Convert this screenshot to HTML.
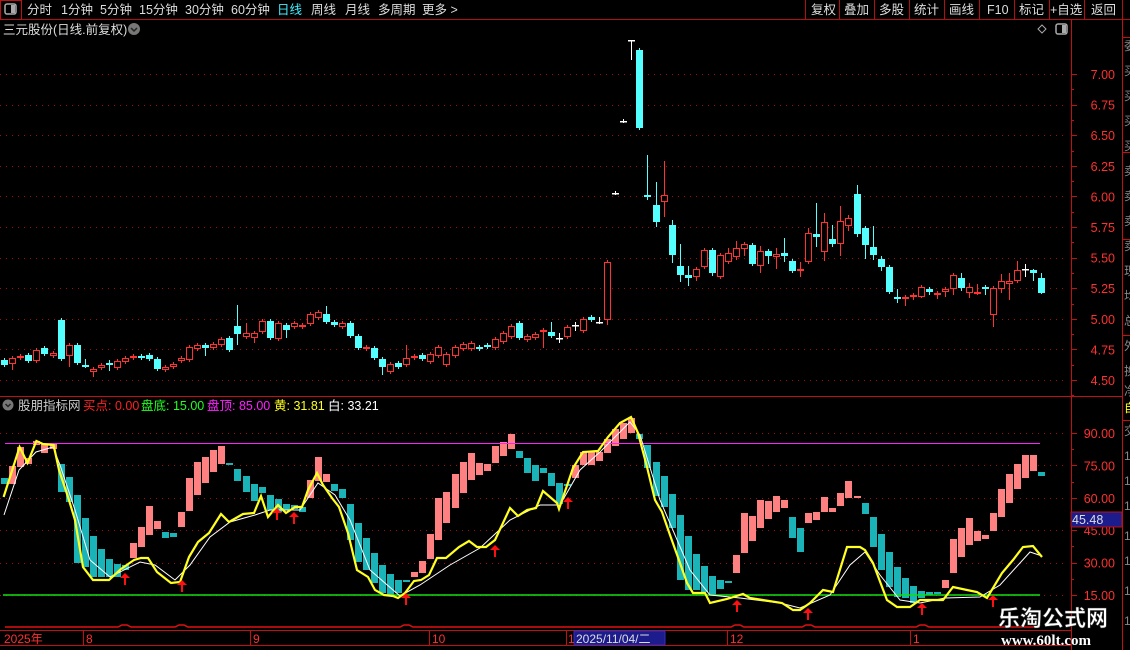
<!DOCTYPE html>
<html><head><meta charset="utf-8"><style>
body{margin:0;background:#000;width:1130px;height:650px;overflow:hidden;font-family:"Liberation Sans","Noto Sans CJK SC",sans-serif;}
svg{position:absolute;left:0;top:0}
</style></head><body>
<svg id="s" width="1130" height="650" xmlns="http://www.w3.org/2000/svg" font-family="Liberation Sans, Noto Sans CJK SC, sans-serif">
<rect width="1130" height="650" fill="#000"/>
<line x1="0" y1="19.5" x2="1130" y2="19.5" stroke="#b01010"/>
<rect x="0.5" y="0.5" width="21" height="19" fill="none" stroke="#c01010"/>
<rect x="5" y="4" width="11" height="10" rx="2" fill="none" stroke="#aaa" stroke-width="1.5"/>
<rect x="11" y="5" width="4" height="8" fill="#aaa"/>
<g font-size="12.5" fill="#ddd">
<text x="27" y="14">分时</text><text x="61" y="14">1分钟</text><text x="100" y="14">5分钟</text><text x="139" y="14">15分钟</text><text x="185" y="14">30分钟</text><text x="231" y="14">60分钟</text>
<text x="277" y="14" fill="#4ef">日线</text><text x="311" y="14">周线</text><text x="345" y="14">月线</text><text x="378" y="14">多周期</text><text x="422" y="14">更多 &gt;</text>
<text x="811" y="14">复权</text><text x="844" y="14">叠加</text><text x="879" y="14">多股</text><text x="914" y="14">统计</text><text x="949" y="14">画线</text><text x="987" y="14">F10</text><text x="1019" y="14">标记</text><text x="1050" y="14">+自选</text><text x="1091" y="14">返回</text>
</g>
<g stroke="#b01010"><line x1="805.5" y1="0" x2="805.5" y2="19"/><line x1="839.5" y1="0" x2="839.5" y2="19"/><line x1="874.5" y1="0" x2="874.5" y2="19"/><line x1="909.5" y1="0" x2="909.5" y2="19"/><line x1="944.5" y1="0" x2="944.5" y2="19"/><line x1="979.5" y1="0" x2="979.5" y2="19"/><line x1="1014.5" y1="0" x2="1014.5" y2="19"/><line x1="1049.5" y1="0" x2="1049.5" y2="19"/><line x1="1084.5" y1="0" x2="1084.5" y2="19"/><line x1="1122.5" y1="0" x2="1122.5" y2="19"/></g>
<text x="3" y="34" font-size="12.5" fill="#ddd">三元股份(日线.前复权)</text>
<circle cx="134" cy="29" r="6" fill="#777"/><path d="M131 28l3 3 3-3" stroke="#222" stroke-width="1.5" fill="none"/>
<path d="M1042 25l4 4-4 4-4-4z" fill="none" stroke="#aaa"/>
<rect x="1056" y="24" width="11" height="10" rx="2" fill="none" stroke="#aaa" stroke-width="1.5"/><rect x="1062" y="25" width="4" height="8" fill="#aaa"/>
<line x1="1071.5" y1="19" x2="1071.5" y2="650" stroke="#c01010"/>
<line x1="1122.5" y1="19" x2="1122.5" y2="650" stroke="#c01010"/>
<line x1="0" y1="396.5" x2="1122" y2="396.5" stroke="#c01010"/>
<g id="grid"></g>
<g id="cand"></g>
<g id="ind"></g>
<line x1="5" y1="443.5" x2="1040" y2="443.5" stroke="#ff20ff"/>
<line x1="3" y1="595" x2="1040" y2="595" stroke="#10e010" stroke-width="1.5"/>
<polyline id="wl" fill="none" stroke="#fff" stroke-width="1" points="4,515 19,470 36,452 53,447 60,465 75,510 90,560 110,577 140,562 155,565 175,580 190,565 210,537 230,522 255,515 270,510 300,510 318,483 335,495 350,520 370,570 400,596 420,585 450,565 480,548 510,520 540,505 560,505 580,470 600,452 620,432 630,422 640,435 660,500 690,570 710,595 740,598 780,603 800,608 830,595 850,565 865,552 880,575 900,600 920,603 945,598 980,597 1000,585 1030,552 1042,556"/>
<polyline fill="none" stroke="#ffff20" stroke-width="2.2" points="3.6,497 19.6,447 27.5,463 36.4,441 43,444 53.6,445 59,470 68,497 75,520 83,567 93,580 109,580 121,569 134,560 141,558 148,558 157,572 171,583 180,582 189,557 198,542 209,533 221,514 229,522 243,514 254,513 261,496 268,517 278,505 286,513 295,507 302,507 308,490 317,473 323,485 332,498 339,507 348,533 357,570 368,577 375,590 384,595 393,596 398,598 405,593 414,581 421,580 429,575 437,558 446,558 459,547 469,541 477,547 486,547 495,540 510,508 518,516 527,510 536,508 543,491 557,503 559,509 573,468 583,452 598,451 608,437 620,423 631,417 638,433 647,467 655,500 662,512 670,535 680,563 687,583 693,593 705,593 710,603 727,599 743,594 750,598 782,603 793,610 800,610 810,603 823,590 833,592 847,547 860,547 865,550 873,563 887,600 897,607 910,607 920,600 943,600 953,587 967,590 977,592 987,598 1002,573 1013,560 1023,547 1033,546 1042,557"/>
<g id="arr" fill="#ff1010"></g>
<path d="M5 627H118l4-2h5l4 2H175l4-2h5l4 2H400l4-2h5l4 2H731l4-2h5l4 2H802l4-2h5l4 2H916l4-2h5l4 2H1040" stroke="#e01010" fill="none" stroke-width="1.5"/>
<line x1="0" y1="630.5" x2="1071" y2="630.5" stroke="#c01010"/>
<line x1="0" y1="645.5" x2="1071" y2="645.5" stroke="#c01010"/>
<g stroke="#c01010"><line x1="83.5" y1="631" x2="83.5" y2="645"/><line x1="250.5" y1="631" x2="250.5" y2="645"/><line x1="429.5" y1="631" x2="429.5" y2="645"/><line x1="566.5" y1="631" x2="566.5" y2="645"/><line x1="727.5" y1="631" x2="727.5" y2="645"/><line x1="910.5" y1="631" x2="910.5" y2="645"/></g>
<rect x="574" y="631" width="91" height="14" fill="#1c1c8c" stroke="#3030c0"/>
<g font-size="12" fill="#ff3030"><text x="4" y="643">2025年</text><text x="86" y="643">8</text><text x="253" y="643">9</text><text x="432" y="643">10</text><text x="568" y="643">1</text><text x="730" y="643">12</text><text x="913" y="643">1</text></g>
<text x="576" y="643" font-size="12" fill="#ddd">2025/11/04/二</text>
<circle cx="8" cy="405" r="5.5" fill="#777"/><path d="M5.5 404l2.5 2.5 2.5-2.5" stroke="#222" stroke-width="1.5" fill="none"/>
<g font-size="12.5"><text x="18" y="410" fill="#ccc">股朋指标网</text><text x="83" y="410" fill="#ff2020">买点: 0.00</text><text x="141" y="410" fill="#20ff20">盘底: 15.00</text><text x="207" y="410" fill="#ff20ff">盘顶: 85.00</text><text x="274" y="410" fill="#ffff20">黄: 31.81</text><text x="328" y="410" fill="#fff">白: 33.21</text></g>
<g id="lab" font-size="12.5" fill="#ff3030" text-anchor="end"></g>
<rect x="1071" y="512" width="51" height="15" fill="#1c1c8c" stroke="#c01010"/>
<text x="1072" y="524" font-size="12.5" fill="#ddd">45.48</text>
<text x="1124" y="412" font-size="12" fill="#ffff20">自</text>
<g font-size="12" fill="#888"><text x="1124" y="50">委</text><text x="1124" y="75">买</text><text x="1124" y="100">买</text><text x="1124" y="125">买</text><text x="1124" y="150">买</text><text x="1124" y="175">卖</text><text x="1124" y="200">卖</text><text x="1124" y="225">卖</text><text x="1124" y="250">卖</text><text x="1124" y="275">现</text><text x="1124" y="300">均</text><text x="1124" y="325">总</text><text x="1124" y="350">外</text><text x="1124" y="375">换</text><text x="1124" y="395">净</text><text x="1124" y="435">交</text><text x="1124" y="460">1</text><text x="1124" y="485">1</text><text x="1124" y="510">1</text><text x="1124" y="540">1</text><text x="1124" y="565">1</text><text x="1124" y="595">1</text><text x="1124" y="625">1</text></g>
<g stroke="#c01010"><line x1="1122" y1="37.5" x2="1130" y2="37.5"/><line x1="1122" y1="152.5" x2="1130" y2="152.5"/><line x1="1122" y1="239.5" x2="1130" y2="239.5"/><line x1="1122" y1="335.5" x2="1130" y2="335.5"/><line x1="1122" y1="420.5" x2="1130" y2="420.5"/></g>
<text x="998" y="626" font-size="22" font-weight="bold" fill="#fff" stroke="#333" stroke-width="0.5">乐淘公式网</text>
<text x="1001" y="645" font-size="15" font-weight="bold" fill="#fff" font-family="Liberation Serif, serif">www.60lt.com</text>
</svg>
<script>
var NS="http://www.w3.org/2000/svg";
function el(p,t,a){var e=document.createElementNS(NS,t);for(var k in a)e.setAttribute(k,a[k]);document.getElementById(p).appendChild(e);return e;}
var pl=["7.00","6.75","6.50","6.25","6.00","5.75","5.50","5.25","5.00","4.75","4.50"];
for(var i=0;i<11;i++){var y=74+i*30.6;var yy=Math.round(y)+0.5;
el("grid","line",{x1:0,y1:yy,x2:1068,y2:yy,stroke:"#a01010","stroke-dasharray":"1,5"});
el("grid","line",{x1:1071,y1:yy,x2:1077,y2:yy,stroke:"#c01010"});
el("grid","line",{x1:1071,y1:Math.round(y+15.3)+0.5,x2:1074,y2:Math.round(y+15.3)+0.5,stroke:"#c01010"});
var t=el("lab","text",{x:1115,y:y+5});t.textContent=pl[i];}
var il=["90.00","75.00","60.00","45.00","30.00","15.00"];
for(var i=0;i<6;i++){var y=433+i*32.4;var yy=Math.round(y)+0.5;
el("grid","line",{x1:0,y1:yy,x2:1068,y2:yy,stroke:"#a01010","stroke-dasharray":"1,5"});
el("grid","line",{x1:1071,y1:yy,x2:1077,y2:yy,stroke:"#c01010"});
el("grid","line",{x1:1071,y1:Math.round(y+16.2)+0.5,x2:1074,y2:Math.round(y+16.2)+0.5,stroke:"#c01010"});
var t=el("lab","text",{x:1115,y:y+5});t.textContent=il[i];}
var C=[["c",360,365],["r",358,364,0,370],["r",356,358],["c",355,361],["r",350,361],["c",348,354],["r",353,356],["c",320,359],["r",345,356,0,367],["c",345,363],
["c",365,366,359],["r",369,372,0,377],["r",365,368],["c",363,364,360,371],["r",361,368],["r",358,362],["r",356,358],["c",356,358],["c",355,359],["c",359,369],
["r",367,370],["r",364,367],["r",358,361],["r",347,360],["r",345,349],["c",345,348,0,356],["r",344,348],["r",339,345],["c",338,350],["c",326,334,305,345],
["r",333,337,323],["r",333,338,0,343],["r",321,332],["c",321,338],["r",323,339],["c",325,330,0,338],["r",323,327],["r",325,327],["r",314,324],["r",312,318],
["c",314,322,306],["c",322,325],["r",323,327],["c",323,336],["c",336,348],["r",347,349],["c",348,358],["c",359,367,0,375],["r",364,372],["c",363,367],
["r",358,365,345],["r",356,358],["c",355,359],["r",354,362],["r",347,356],["r",354,365],["r",347,356],["r",344,349],["r",343,349],["c",347,349],
["c",345,347],["r",339,348],["r",333,342],["r",326,337],["c",323,338],["r",336,340],["r",334,338],["f",330,332,0,348],["c",332,336,322],["w",338,338,333,343],
["r",327,337],["w",325,325,322,331],["r",319,331],["c",317,320],["w",322,322,317],["r",262,320,0,325],["w",193,193],["w",121,121],["w",40,40,40,60],["c",50,128],
["c",195,195,155,200],["c",205,222,182,227],["r",195,202,161,217],["c",225,255,220,263],["c",266,275,244,282],["c",275,278,266,286],["r",269,277,0,281],["r",250,267],["c",250,273,0,276],["r",255,277],
["r",253,262,248],["r",248,257,241,260],["r",244,249,0,256],["c",245,264,0,266],["r",251,266,246,273],["c",251,256,0,264],["r",254,257,248,269],["c",253,256,238,262],["c",261,271,0,273],["f",269,270,262,277],
["r",233,262,228],["c",234,237,203,247],["r",222,252,213,261],["c",239,244,225,247],["r",221,244,206,256],["r",218,226,215,231],["c",194,234,185,237],["c",228,245,0,259],["c",247,255,226,260],["c",259,267,256,271],
["c",267,292,0,294],["c",297,299,289,303],["f",297,298,295,306],["r",295,297,0,300],["r",287,297,0,298],["c",289,292,0,295],["r",293,295,0,299],["r",289,292,0,297],["r",275,289,0,295],["c",278,288,273,291],
["r",287,293,283,298],["f",292,293,284,295],["c",287,289,0,295],["r",288,315,0,327],["r",281,289,274,293],["r",281,284,273,300],["r",270,281,261,283],["w",269,269,264,277],["c",270,273,269,281],["c",278,293,273,294]];
for(var i=0;i<C.length;i++){var d=C[i],x=Math.round(4.3+8.04*i),t=d[1],b=d[2],h=d[3]||t-2,l=d[4]||b+2;
var col=d[0]=="c"?"#54ffff":d[0]=="w"?"#fff":"#ff3232";
el("cand","line",{x1:x+0.5,y1:h,x2:x+0.5,y2:l,stroke:col});
if(d[0]=="r"){el("cand","rect",{x:x-2.5,y:t+0.5,width:6,height:Math.max(b-t-1,1),fill:"#000",stroke:col});}
else if(d[0]=="w"){el("cand","rect",{x:x-3,y:t,width:7,height:1.5,fill:col});}
else{el("cand","rect",{x:x-3,y:t,width:7,height:Math.max(b-t,2),fill:col});}}
var B=[["c",478,484],["p",466,484],["p",447,467],["p",458,464],["p",441,445],["p",443,453],["p",444,449],["c",464,492],["c",477,502],["c",495,563],
["c",518,567],["c",536,577],["c",549,577],["c",559,577],["c",564,577],["c",565,570],["p",543,558],["p",527,547],["p",506,535],["p",521,529],
["c",532,538],["c",533,537],["p",512,527],["p",478,511],["p",462,495],["p",457,483],["p",450,472],["p",446,464],["c",463,465],["c",469,481],
["c",476,492],["c",484,501],["c",487,493],["c",495,510],["c",499,512],["c",504,510],["c",505,509],["c",507,512],["p",480,498],["p",457,481],
["p",474,482],["c",484,491],["c",489,498],["c",504,540],["c",523,562],["c",538,570],["c",553,583],["c",565,593],["c",574,595],["c",580,593],
["c",580,582],["p",572,577],["p",561,573],["p",534,559],["p",498,540],["p",492,523],["p",474,508],["p",462,493],["p",453,480],["p",463,475],
["p",464,471],["p",446,463],["p",442,456],["p",434,449],["c",451,458],["c",458,473],["c",465,481],["c",468,473],["c",473,486],["c",483,504],
["c",484,486],["p",465,478],["p",452,465],["p",451,465],["p",452,461],["p",439,453],["p",429,446],["p",423,439],["p",418,433],["c",434,439],
["c",445,468],["c",462,496],["c",476,507],["c",494,528],["c",515,580],["c",536,590],["c",554,590],["c",566,592],["c",576,595],["c",580,589],
["c",581,583],["p",555,573],["p",513,553],["p",516,541],["p",500,528],["p",501,519],["p",496,512],["p",500,508],["c",517,538],["c",528,552],
["p",513,523],["p",512,520],["p",497,512],["p",508,512],["p",493,506],["p",481,498],["p",496,498],["c",503,514],["c",517,547],["c",534,570],
["c",552,587],["c",567,597],["c",578,598],["c",586,603],["c",591,598],["c",592,595],["c",592,594],["p",580,588],["p",539,573],["p",528,557],
["p",518,545],["p",531,541],["p",535,539],["p",513,531],["p",489,517],["p",474,503],["p",464,489],["p",455,478],["p",455,471],["c",472,476]];
for(var i=0;i<B.length;i++){var d=B[i],x=Math.round(4.3+8.04*i);
el("ind","rect",{x:x-3,y:d[1],width:7,height:Math.max(d[2]-d[1],2),fill:d[0]=="p"?"#ff8080":"#1ab4b8"});}
var A=[[125,573],[182,580],[277,508],[294,512],[406,593],[495,545],[568,497],[737,600],[808,608],[922,603],[993,595]];
for(var i=0;i<A.length;i++){var x=A[i][0],y=A[i][1];
el("arr","path",{d:"M"+(x-5)+" "+(y+5)+"L"+x+" "+y+"L"+(x+5)+" "+(y+5)+"Z"});
el("arr","rect",{x:x-1,y:y+5,width:2,height:7});}
</script>
</body></html>
